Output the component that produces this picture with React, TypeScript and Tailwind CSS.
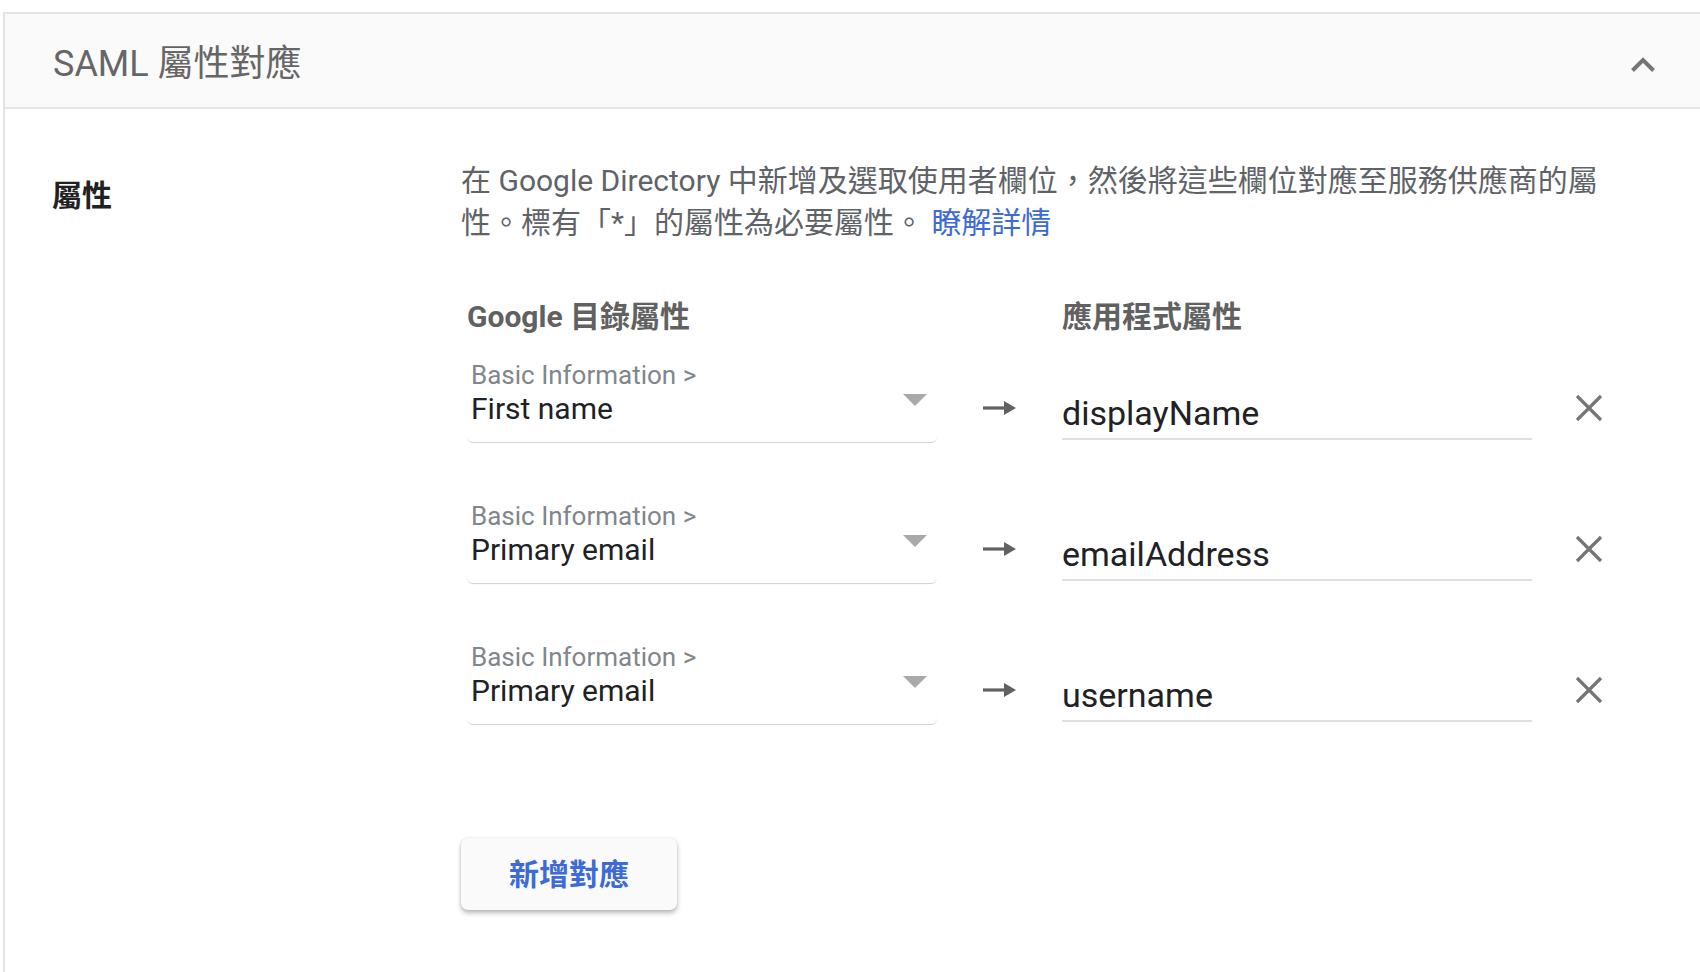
const rows = [
  { group: "Basic Information >", field: "First name", target: "displayName" },
  { group: "Basic Information >", field: "Primary email", target: "emailAddress" },
  { group: "Basic Information >", field: "Primary email", target: "username" },
];

function ChevronUp() {
  return (
    <svg width="26" height="18" viewBox="0 0 26 18" fill="none" aria-hidden>
      <path d="M2.5 15.5 L13 5 L23.5 15.5" stroke="#757575" strokeWidth="4" />
    </svg>
  );
}

function Caret() {
  return (
    <svg width="24" height="12" viewBox="0 0 24 12" aria-hidden>
      <path d="M0 0 H24 L12 12 Z" fill="#a9a9a9" />
    </svg>
  );
}

function ArrowRight() {
  return (
    <svg width="33" height="14" viewBox="0 0 33 14" aria-hidden>
      <path d="M0 7 H24" stroke="#616161" strokeWidth="3.2" />
      <path d="M21 0 L33 7 L21 14 Z" fill="#616161" />
    </svg>
  );
}

function CloseIcon() {
  return (
    <svg width="28" height="28" viewBox="0 0 28 28" aria-hidden>
      <path d="M2 2 L26 26 M26 2 L2 26" stroke="#757575" strokeWidth="3.2" />
    </svg>
  );
}

function MappingRow({
  group,
  field,
  target,
}: {
  group: string;
  field: string;
  target: string;
}) {
  return (
    <div className="flex h-[90px] items-start">
      <div className="relative h-[90px] w-[470px] rounded-b-[6px] bg-white pl-[4px] pt-[8px] shadow-[0_2px_1px_-1px_rgba(0,0,0,0.12),0_1px_1px_0_rgba(0,0,0,0.08)]">
        <div className="text-[26px] leading-[30px] text-[#80868b]">{group}</div>
        <div className="mt-[2px] text-[30px] leading-[34px] text-[#202124]">{field}</div>
        <div className="absolute right-[10px] top-[42px]">
          <Caret />
        </div>
      </div>
      <div className="flex w-[125px] justify-center pt-[49px]">
        <ArrowRight />
      </div>
      <div className="flex h-[88px] w-[470px] items-end border-b-2 border-[#e0e0e0] pb-[5px] text-[34px] leading-[40px] text-[#202124]">
        {target}
      </div>
      <button type="button" className="ml-[43px] mt-[42px]" aria-label="移除對應">
        <CloseIcon />
      </button>
    </div>
  );
}

export default function App() {
  return (
    <div className="h-[972px] w-full overflow-hidden bg-white pl-[3px] pt-[12px] font-['Roboto','Noto_Sans_CJK_TC',sans-serif]">
      <section className="h-[1000px] border-l-2 border-t-2 border-[#e4e4e4]">
        <header className="flex h-[95px] items-center justify-between border-b-2 border-[#e4e4e4] bg-[#fafafa] pl-[48px] pr-[44px] pt-[6px]">
          <h1 className="text-[36px] font-normal leading-[40px] text-[#666666]">SAML 屬性對應</h1>
          <ChevronUp />
        </header>

        <div className="flex pt-[51px]">
          <div className="w-[456px] shrink-0 pl-[47px] pt-[15px] text-[30px] font-bold leading-[42px] text-[#212121]">
            屬性
          </div>

          <div className="flex flex-col">
            <p className="w-[1150px] text-[30px] leading-[42px] text-[#5f6368]">
              在 Google Directory 中新增及選取使用者欄位，然後將這些欄位對應至服務供應商的屬性。標有「*」的屬性為必要屬性。{" "}
              <a href="#" className="text-[#3d6ad6]">
                瞭解詳情
              </a>
            </p>

            <div className="ml-[6px] mt-[52px]">
              <div className="flex h-[40px] items-center text-[30px] font-bold text-[#616161]">
                <div className="w-[595px]">Google 目錄屬性</div>
                <div>應用程式屬性</div>
              </div>

              <div className="mt-[16px] flex flex-col gap-[51px]">
                {rows.map((r, i) => (
                  <MappingRow key={i} {...r} />
                ))}
              </div>
            </div>

            <button
              type="button"
              className="mt-[114px] h-[72px] w-[216px] rounded-[7px] bg-[#fafafa] text-[30px] font-bold text-[#3d6ad6] shadow-[0_3px_5px_rgba(0,0,0,0.28),0_0_2px_rgba(0,0,0,0.12)]"
            >
              新增對應
            </button>
          </div>
        </div>
      </section>
    </div>
  );
}
